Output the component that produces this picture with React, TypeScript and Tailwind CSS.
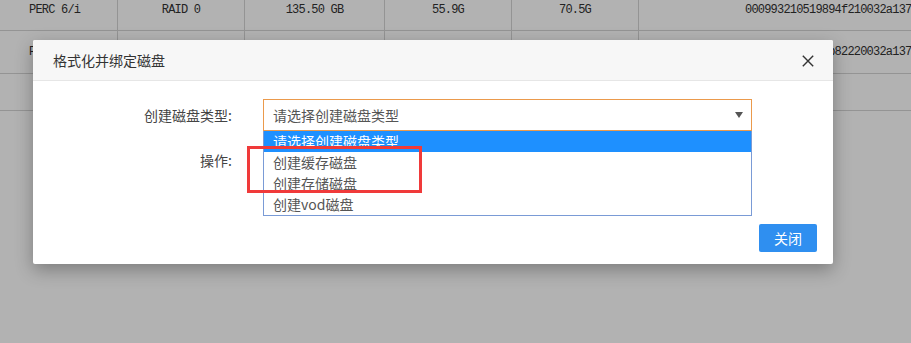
import React from "react";

const cjk = "font-['Noto_Sans_CJK_SC','Noto_Sans',sans-serif]";
const mono = "font-['Liberation_Mono',monospace] text-[12px] tracking-[-0.8px] text-[#222]";

function Row({ h, cells }: { h: string; cells: string[] | null }) {
  return (
    <div className={`flex ${h} border-b border-[#949494]`}>
      {cells ? (
        <>
          <div className="w-[118px] shrink-0 border-r border-[#949494] flex items-center pl-[29px] whitespace-nowrap">{cells[0]}</div>
          <div className="w-[127px] shrink-0 border-r border-[#949494] flex items-center justify-center whitespace-nowrap">{cells[1]}</div>
          <div className="w-[140px] shrink-0 border-r border-[#949494] flex items-center justify-center whitespace-nowrap">{cells[2]}</div>
          <div className="w-[127px] shrink-0 border-r border-[#949494] flex items-center justify-center whitespace-nowrap">{cells[3]}</div>
          <div className="w-[127px] shrink-0 border-r border-[#949494] flex items-center justify-center whitespace-nowrap">{cells[4]}</div>
          <div className="flex-1 flex items-center pl-[106px] whitespace-nowrap overflow-hidden">{cells[5]}</div>
        </>
      ) : null}
    </div>
  );
}

export default function App() {
  return (
    <div className="relative w-[911px] h-[343px] overflow-hidden bg-[#b2b2b2]">
      <div className={`-mt-[11px] ${mono}`}>
        <Row h="h-[42px]" cells={["PERC 6/i", "RAID 0", "135.50 GB", "55.9G", "70.5G", "000993210519894f210032a137"]} />
        <Row h="h-[43px]" cells={["PERC 6/i", "RAID 0", "135.50 GB", "55.9G", "70.5G", "0009932105196b82220032a137"]} />
        <Row h="h-[37px]" cells={null} />
      </div>

      <div className={`absolute left-[33px] top-[40px] w-[800px] h-[224px] bg-white rounded-[2px] shadow-[0_6px_18px_rgba(0,0,0,0.3)] flex flex-col ${cjk}`}>
        <div className="h-[41px] shrink-0 bg-[#f7f7f7] border-b border-[#e6e6e6] flex items-center justify-between pl-[20px] pr-[19px] rounded-t-[2px]">
          <span className="text-[14px] leading-[20px] text-[#333]">格式化并绑定磁盘</span>
          <svg width="12" height="12" viewBox="0 0 12 12" className="mt-[1px]">
            <path d="M0.8 0.8 L11.2 11.2 M11.2 0.8 L0.8 11.2" stroke="#333" strokeWidth="1.4" fill="none" />
          </svg>
        </div>
        <div className="flex-1 flex flex-col pt-[18px]">
          <div className="flex items-center h-[32px]">
            <div className="w-[199px] text-right text-[14px] leading-[20px] text-[#444]">创建磁盘类型:</div>
            <div className="ml-[31px] w-[489px] h-[32px] border border-[#eb9a4c] flex items-center justify-between pl-[9px] pr-[8px]">
              <span className="text-[14px] leading-[20px] text-[#555]">请选择创建磁盘类型</span>
              <svg width="8" height="6" viewBox="0 0 8 6">
                <path d="M0 0 L8 0 L4 6 Z" fill="#555" />
              </svg>
            </div>
          </div>
          <div className="flex items-center h-[32px] mt-[13px]">
            <div className="w-[199px] text-right text-[14px] leading-[20px] text-[#444]">操作:</div>
          </div>
          <div className="mt-auto flex justify-end pr-[16px] pb-[12px]">
            <button className="w-[58px] h-[28px] bg-[#2f8ff0] rounded-[2px] text-white text-[14px] leading-[20px] flex items-center justify-center">关闭</button>
          </div>
        </div>

        <div className="absolute left-[230px] top-[91px] w-[489px] bg-white border border-t-0 border-[#7a9bd6] text-[14px]">
          <div className="h-[21px] bg-[#1e90ff] text-white pl-[9px] leading-[21px] overflow-hidden">请选择创建磁盘类型</div>
          <div className="h-[21px] text-[#555] pl-[9px] leading-[21px]">创建缓存磁盘</div>
          <div className="h-[21px] text-[#555] pl-[9px] leading-[21px]">创建存储磁盘</div>
          <div className="h-[21px] text-[#555] pl-[9px] leading-[21px]">创建vod磁盘</div>
        </div>
      </div>

      <div className="absolute left-[247px] top-[146px] w-[175px] h-[47px] border-[3px] border-[#f03a3a]" />
    </div>
  );
}
